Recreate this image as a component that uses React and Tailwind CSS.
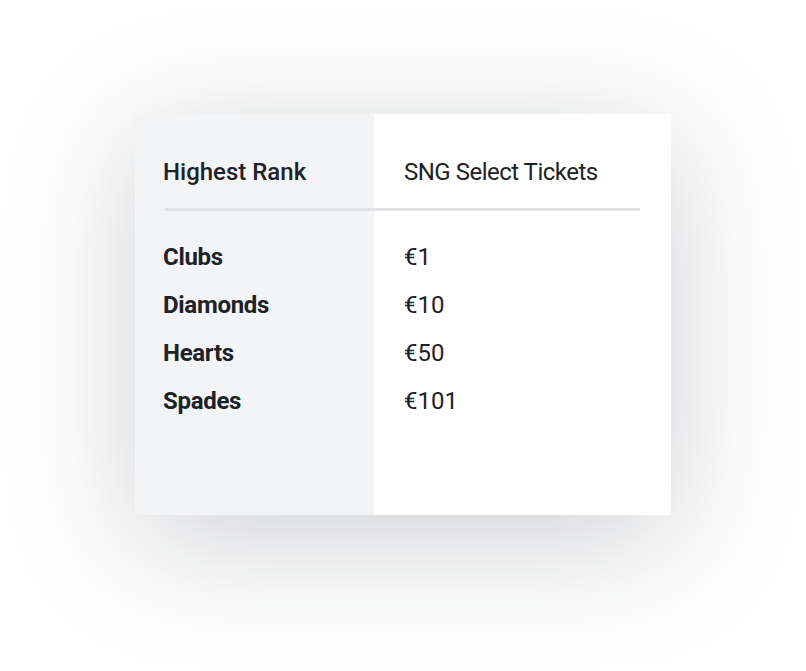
const rows = [
  ["Clubs", "€1"],
  ["Diamonds", "€10"],
  ["Hearts", "€50"],
  ["Spades", "€101"],
];

export default function App() {
  return (
    <div className="min-h-screen bg-white flex justify-center items-start pt-[114px] font-['Roboto',sans-serif] text-[#1d2226]">
      <div className="w-[536px] h-[401px] bg-[linear-gradient(to_right,#f3f4f6_239px,#ffffff_239px)] shadow-[0_25px_120px_rgba(30,35,45,0.21)] pl-7 pr-[31px] pt-[46px]">
        <div className="grid grid-cols-[241px_1fr] text-[24px] leading-6">
          <div className="font-medium">Highest Rank</div>
          <div className="font-normal tracking-[-0.5px]">SNG Select Tickets</div>
        </div>
        <div className="mt-[24px] ml-[2px] h-[3px] bg-[#dfe1e4]" />
        <div className="mt-[34px] grid grid-cols-[241px_1fr] gap-y-6 text-[24px] leading-6">
          {rows.map(([label, value]) => (
            <div key={label} className="contents">
              <div className="font-bold tracking-[-0.3px]">{label}</div>
              <div className="font-normal">{value}</div>
            </div>
          ))}
        </div>
      </div>
    </div>
  );
}
